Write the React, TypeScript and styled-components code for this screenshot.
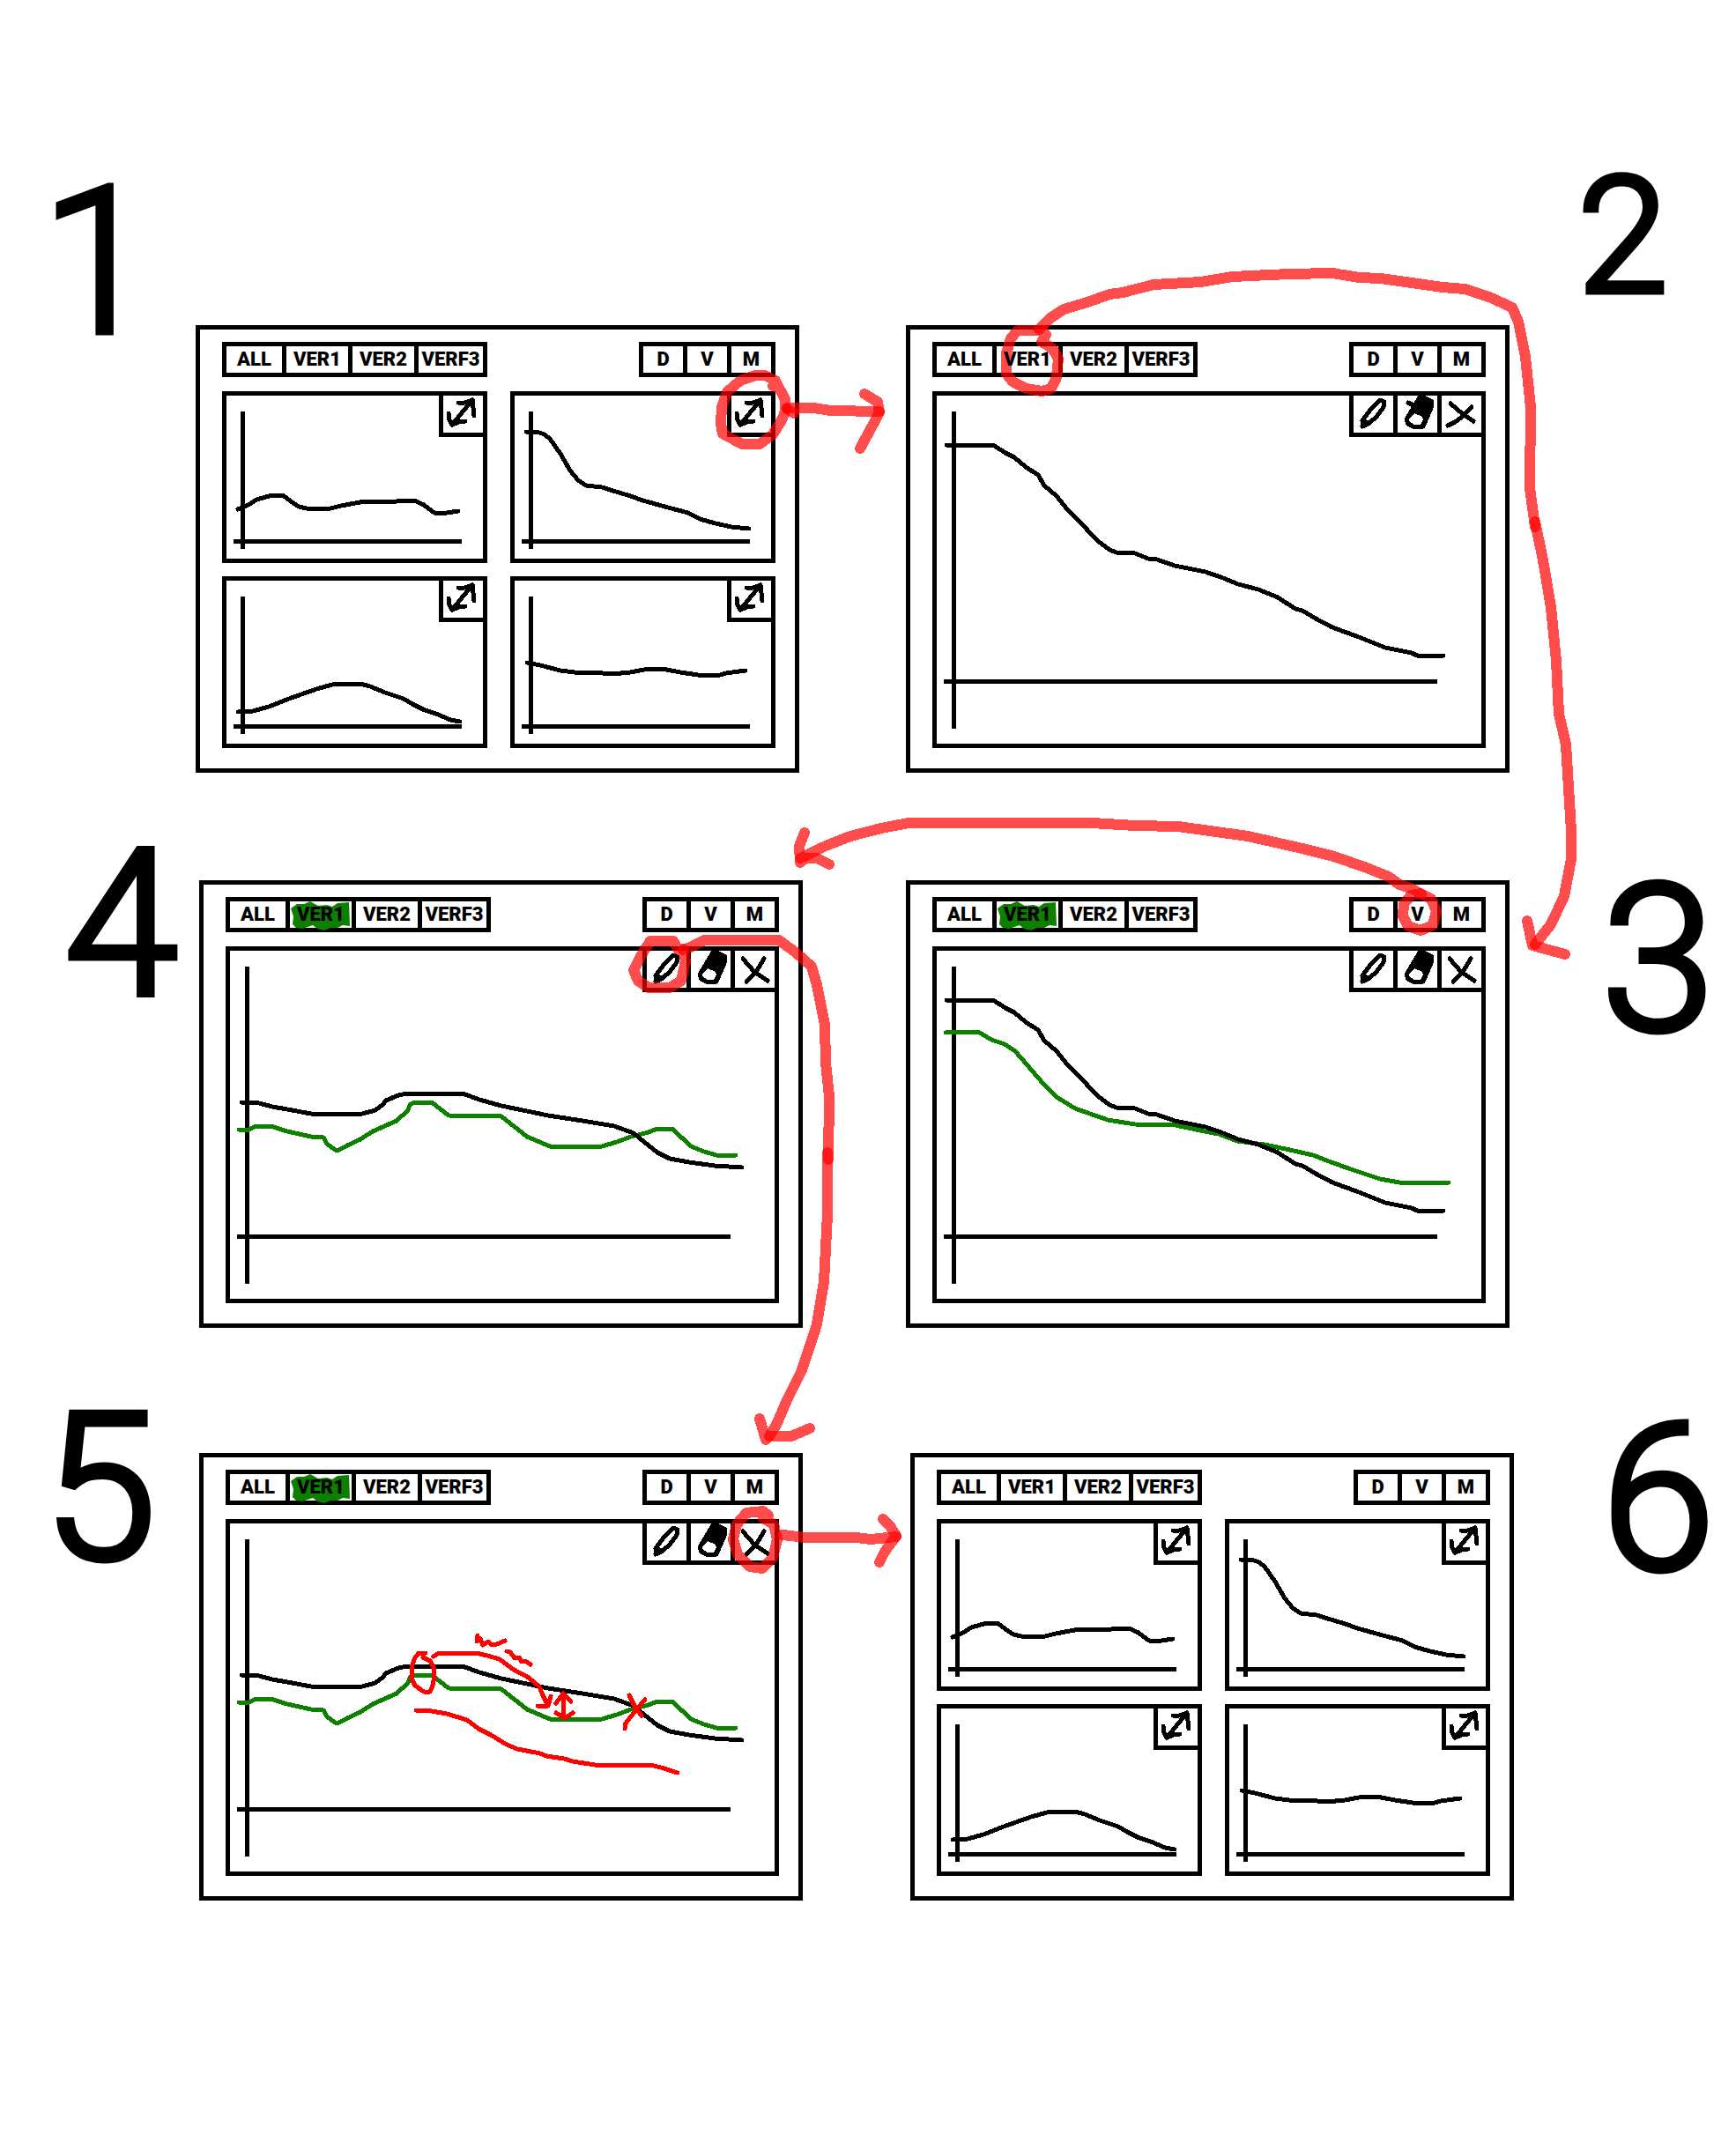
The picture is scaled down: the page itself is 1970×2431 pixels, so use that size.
import React from 'react';
import styled, { createGlobalStyle } from 'styled-components';

const INK = '#000000';
const GREEN = '#0e8000';
const RED = '#ff0000';

const GlobalStyle = createGlobalStyle`
  *, *::before, *::after { box-sizing: border-box; }
  body {
    margin: 0;
    background: #ffffff;
    color: ${INK};
    font-family: Roboto, "Liberation Sans", Arial, sans-serif;
  }
`;

const Page = styled.main`
  position: relative;
  display: flex;
  flex-direction: column;
  padding: 200px 0 274px;
`;

const Row = styled.section<{ $left: number; $gap: number; $right: number; $space?: number }>`
  display: grid;
  grid-template-columns: ${p => p.$left}px 1fr ${p => p.$gap}px 1fr ${p => p.$right}px;
  align-items: start;
  margin-top: ${p => p.$space ?? 0}px;
`;

const StepNumber = styled.h2<{ $column: number; $align?: string; $drop?: number; $short?: boolean }>`
  grid-row: 1;
  grid-column: ${p => p.$column};
  margin: 0;
  padding: ${p => p.$drop ?? 0}px 24px 0;
  font-size: ${p => (p.$short ? 184 : 232)}px;
  font-weight: 300;
  line-height: ${p => (p.$short ? 136 : 172)}px;
  text-align: ${p => p.$align ?? 'center'};
  -webkit-text-stroke: 7px ${INK};
  stroke-linejoin: round;
`;

const Screen = styled.article<{ $column: number; $drop: number }>`
  grid-row: 1;
  grid-column: ${p => p.$column};
  margin-top: ${p => p.$drop}px;
  padding: 14px 22px 23px 25px;
  border: 5px solid ${INK};
`;

const Toolbar = styled.header`
  display: flex;
  justify-content: space-between;
  margin-bottom: 16px;
`;

const Group = styled.div`
  display: flex;
  height: 40px;
  border: 5px solid ${INK};
`;

const ToggleButton = styled.button<{ $width: number }>`
  display: grid;
  place-items: center;
  width: ${p => p.$width}px;
  height: 30px;
  padding: 0;
  border: 0;
  background: none;
  color: ${INK};
  font: 900 22px/30px Roboto, "Liberation Sans", Arial, sans-serif;
  cursor: pointer;

  & + & { border-left: 5px solid ${INK}; }
`;

const Label = styled.span`
  grid-area: 1 / 1;
  z-index: 1;
`;

const Scribble = styled.svg`
  grid-area: 1 / 1;
  display: block;
  width: 70px;
  height: 30px;
  overflow: visible;
`;

const Panels = styled.div<{ $columns: number }>`
  display: grid;
  grid-template-columns: repeat(${p => p.$columns}, 1fr);
  gap: 15px 26px;
`;

const Panel = styled.figure`
  display: grid;
  margin: 0;
  border: 5px solid ${INK};
`;

const Drawing = styled.svg`
  grid-area: 1 / 1;
  display: block;
  width: 100%;
  height: auto;
  fill: none;
  stroke: ${INK};
  stroke-width: 5;
  stroke-linecap: round;
  stroke-linejoin: round;
  shape-rendering: crispEdges;
`;

const Tools = styled.div`
  grid-area: 1 / 1;
  justify-self: end;
  align-self: start;
  display: flex;
`;

const ToolButton = styled.button`
  width: 50px;
  height: 47px;
  padding: 0;
  border: 0 solid ${INK};
  border-left-width: 5px;
  border-bottom-width: 5px;
  background: #ffffff;
  cursor: pointer;
`;

const Icon = styled.svg`
  display: block;
  width: 45px;
  height: 42px;
  fill: none;
  stroke: ${INK};
  stroke-width: 5;
  stroke-linecap: round;
  stroke-linejoin: round;
  shape-rendering: crispEdges;
`;

const FlowLayer = styled.svg`
  position: absolute;
  inset: 0;
  width: 100%;
  height: 100%;
  pointer-events: none;
  fill: none;
  stroke: ${RED};
  stroke-opacity: 0.7;
  stroke-width: 12;
  stroke-linecap: round;
  stroke-linejoin: round;
  shape-rendering: crispEdges;
`;

/* ---------- icons ---------- */

const ExpandIcon = () => (
  <Icon viewBox="0 0 45 42" aria-hidden="true">
    <path d="M10 33L33 5M17 8L24 8L33 5L34 14L35 23M6 20L7 28L10 33L18 30L25 29" />
  </Icon>
);

const PencilIcon = () => (
  <Icon viewBox="0 0 45 42" aria-hidden="true">
    <path d="M10 35L10 28L20 15L30 5L35 7L34 13L26 24L18 31L10 35M10 28L16 31" />
  </Icon>
);

const EraserIcon = ({ tick }: { tick: boolean }) => (
  <Icon viewBox="0 0 45 42" aria-hidden="true">
    <path fill={INK} d="M25 2L32 3L39 7L38 14L29 35L20 36L12 32L10 27L16 17Z" />
    <path fill="#ffffff" stroke="none" d="M19 20L28 24L29 27L26 33L19 33L13 29L13 26Z" />
    {tick && <path d="M12 8L18 11" />}
  </Icon>
);

const CloseIcon = ({ tall }: { tall: boolean }) => (
  <Icon viewBox="0 0 45 42" aria-hidden="true">
    <path d={tall ? 'M9 9L22 24L37 34M33 9L24 24L13 35' : 'M10 9L24 21L36 29M34 13L22 25L15 30L7 34'} />
  </Icon>
);

/* ---------- charts ---------- */

const SMALL = [
  {
    name: 'Distance',
    line: '13,129 25,124 34,118 52,113 64,113 73,120 82,126 91,128 118,128 130,125 157,120 193,120 202,119 213,119 224,124 236,133 250,133 263,131',
  },
  {
    name: 'Velocity',
    line: '13,41 25,41 34,44 40,49 52,66 63,85 72,96 81,102 99,104 115,109 135,115 142,118 174,127 197,133 210,140 228,145 246,149 266,151',
  },
  {
    name: 'Momentum',
    line: '13,149 30,148 48,143 71,134 102,123 120,118 134,117 152,117 163,120 180,127 201,134 211,140 225,147 238,151 254,158 265,160',
  },
  {
    name: 'Overview',
    line: '14,93 29,96 52,102 68,104 90,104 110,106 131,104 147,101 167,100 188,104 208,107 233,107 240,105 262,102',
  },
];

const SLOPE =
  '11,56 64,56 78,65 88,70 101,81 115,90 122,102 136,114 148,129 158,139 183,165 196,175 204,178 225,179 240,185 250,186 270,193 305,200 325,207 342,214 365,220 387,229 407,242 415,244 430,253 449,263 479,274 509,286 539,292 545,295 575,295';
const SLOPE_GREEN =
  '10,93 20,92 47,92 62,101 77,106 89,114 102,129 121,151 136,166 157,179 194,192 225,197 271,198 304,205 320,208 341,216 372,220 396,225 427,232 445,239 470,248 503,259 525,263 581,263';
const WAVE =
  '13,172 29,172 48,177 65,180 92,185 150,185 165,181 173,175 177,170 191,164 201,162 264,162 283,169 308,176 337,182 361,187 400,193 436,199 458,207 470,217 485,229 499,236 521,240 550,244 581,246';
const WAVE_GREEN =
  '10,203 22,203 29,199 46,199 65,205 92,211 106,212 110,219 119,226 124,226 133,221 148,214 162,205 189,193 202,181 204,175 209,172 229,172 248,187 308,188 337,211 363,222 422,222 439,217 455,211 475,206 485,202 502,202 523,222 538,228 552,232 574,232';

const PEN_NOTES = [
  'M222 147L214 147L209 154L206 164L206 176L210 184L220 191L227 191L230 184L232 173L231 163L227 156L219 152',
  'M231 151L237 147L279 147L292 150L306 154L322 166L339 175L351 185L354 193L360 205',
  'M349 207L361 207L364 196',
  'M281 127L280 134L284 131L287 138L293 134L297 138L303 137L312 133',
  'M314 145L318 146L323 153L328 152L331 157L335 156L341 160',
  'M378 193L378 220M370 204L378 193L387 202M370 215L375 218L380 221L389 215',
  'M453 195L460 209L467 218M471 200L462 210L448 228L448 233',
  'M211 212L229 213L246 216L269 223L282 233L296 240L314 251L326 256L352 261L359 264L379 267L389 270L414 274L477 274L489 277L508 283',
];

const SmallChart = ({ name, line }: { name: string; line: string }) => (
  <Panel>
    <Drawing viewBox="0 0 291 185" role="img" aria-label={`${name} chart`}>
      <path strokeLinecap="butt" d="M18 18V174M8 165H267" />
      <polyline points={line} />
    </Drawing>
    <Tools>
      <ToolButton type="button" aria-label="Expand chart"><ExpandIcon /></ToolButton>
    </Tools>
  </Panel>
);

type DetailProps = { line: string; compare?: string; notes?: boolean };

const DetailChart = ({ line, compare, notes }: DetailProps) => (
  <Panel>
    <Drawing viewBox="0 0 618 395" role="img" aria-label="Detail chart">
      <path strokeLinecap="butt" d="M19 18V378M8 324H568" />
      {compare && <polyline stroke={GREEN} points={compare} />}
      <polyline points={line} />
      {notes && PEN_NOTES.map(d => <path key={d} stroke={RED} d={d} />)}
    </Drawing>
    <Tools>
      <ToolButton type="button" aria-label="Draw"><PencilIcon /></ToolButton>
      <ToolButton type="button" aria-label="Erase"><EraserIcon tick={!compare} /></ToolButton>
      <ToolButton type="button" aria-label="Close"><CloseIcon tall={!!compare} /></ToolButton>
    </Tools>
  </Panel>
);

/* ---------- screens ---------- */

const FILTERS = [
  { label: 'ALL', width: 63 },
  { label: 'VER1', width: 75 },
  { label: 'VER2', width: 75 },
  { label: 'VERF3', width: 78 },
];

const MODES = [
  { label: 'D', width: 45 },
  { label: 'V', width: 50 },
  { label: 'M', width: 50 },
];

type MockProps = { column: number; drop: number; selected?: string; children: React.ReactNode };

const MockScreen = ({ column, drop, selected, children }: MockProps) => (
  <Screen $column={column} $drop={drop}>
    <Toolbar>
      <Group role="group" aria-label="Filter">
        {FILTERS.map(f => (
          <ToggleButton key={f.label} type="button" $width={f.width} aria-pressed={f.label === selected}>
            {f.label === selected && (
              <Scribble viewBox="0 0 70 30" aria-hidden="true">
                <path
                  fill={GREEN}
                  d="M1 8L8 3L16 3L23 0L32 5L42 4L48 6L54 2L67 1L68 28L60 27L54 30L46 30L39 33L31 31L26 27L14 31L7 30L3 26L4 17Z"
                />
              </Scribble>
            )}
            <Label>{f.label}</Label>
          </ToggleButton>
        ))}
      </Group>
      <Group role="group" aria-label="Mode">
        {MODES.map(m => (
          <ToggleButton key={m.label} type="button" $width={m.width}>
            <Label>{m.label}</Label>
          </ToggleButton>
        ))}
      </Group>
    </Toolbar>
    {children}
  </Screen>
);

const Overview = () => (
  <Panels $columns={2}>
    {SMALL.map(c => <SmallChart key={c.name} {...c} />)}
  </Panels>
);

const Detail = (props: DetailProps) => (
  <Panels $columns={1}>
    <DetailChart {...props} />
  </Panels>
);

/* ---------- red marker strokes that link the screens ---------- */

const FLOW = [
  // 1 to 2
  'M877 438L885 442L891 453L891 467L887 477L877 493L862 504L842 504L820 492L818 480L819 463L825 445L840 432L857 426L868 426L880 432L884 440',
  'M893 463L923 463L943 466L998 467',
  'M893 464L901 469',
  'M981 447L996 456L998 468L990 483L976 509',
  // 2 to 3
  'M1187 380L1182 388L1194 395L1201 407L1199 428L1193 441L1182 444L1164 441L1149 433L1142 424L1142 401L1147 384L1155 375L1184 375',
  'M1179 374L1192 361L1207 351L1234 343L1259 334L1274 332L1309 323L1363 320L1398 314L1463 311L1512 310L1542 315L1567 316L1637 326L1662 328L1692 338L1716 349L1723 365L1731 405L1737 462L1736 554L1742 598',
  'M1742 592L1751 636L1760 689L1766 750L1769 810L1777 845L1783 943L1783 975L1775 1017L1760 1049L1742 1072',
  'M1733 1045L1739 1073L1776 1083',
  // 3 to 4
  'M1612 1014L1624 1020L1630 1034L1626 1050L1612 1056L1598 1051L1592 1040L1593 1026L1601 1016L1612 1014',
  'M1613 1015L1603 1009L1588 1004L1576 995L1551 985L1514 972L1478 963L1416 949L1337 938L1288 937L1239 934L1031 934L1000 940L965 949L937 960L908 974',
  'M913 945L907 960L908 979L914 974L927 974L941 981',
  // 4 to 5
  'M770 1078L764 1068L738 1068L729 1082L719 1101L724 1113L736 1121L760 1121L773 1113L778 1091L775 1077',
  'M775 1078L784 1075L799 1067L884 1067L903 1081L921 1097L927 1118L936 1163L937 1206L941 1244L940 1316',
  'M939 1308L939 1378L935 1455L927 1503L910 1555L893 1589L881 1617L873 1630',
  'M862 1610L869 1634L873 1630L898 1630L919 1621',
  // 5 to 6
  'M866 1723L878 1730L882 1747L877 1768L865 1780L851 1778L837 1764L832 1747L836 1730L847 1717L866 1715L872 1720',
  'M888 1742L914 1745L972 1745L988 1747L1017 1744',
  'M1002 1724L1010 1732L1017 1743L1004 1761L998 1773',
];

export default function App() {
  return (
    <>
      <GlobalStyle />
      <Page>
        <Row $left={222} $gap={121} $right={257}>
          <StepNumber $column={1} $drop={12}>1</StepNumber>
          <MockScreen column={2} drop={169}><Overview /></MockScreen>
          <MockScreen column={4} drop={169}><Detail line={SLOPE} /></MockScreen>
          <StepNumber $column={5} $short>2</StepNumber>
        </Row>
        <Row $left={226} $gap={117} $right={257} $space={75}>
          <StepNumber $column={1} $align="right" $drop={12}>4</StepNumber>
          <MockScreen column={2} drop={47} selected="VER1">
            <Detail line={WAVE} compare={WAVE_GREEN} />
          </MockScreen>
          <MockScreen column={4} drop={47} selected="VER1">
            <Detail line={SLOPE} compare={SLOPE_GREEN} />
          </MockScreen>
          <StepNumber $column={5} $align="right" $drop={52}>3</StepNumber>
        </Row>
        <Row $left={226} $gap={122} $right={252} $space={85}>
          <StepNumber $column={1} $drop={12}>5</StepNumber>
          <MockScreen column={2} drop={57} selected="VER1">
            <Detail line={WAVE} compare={WAVE_GREEN} notes />
          </MockScreen>
          <MockScreen column={4} drop={57}><Overview /></MockScreen>
          <StepNumber $column={5} $align="right" $drop={24}>6</StepNumber>
        </Row>
        <FlowLayer viewBox="0 0 1970 2431" preserveAspectRatio="none" aria-hidden="true">
          {FLOW.map(d => <path key={d} d={d} />)}
        </FlowLayer>
      </Page>
    </>
  );
}
